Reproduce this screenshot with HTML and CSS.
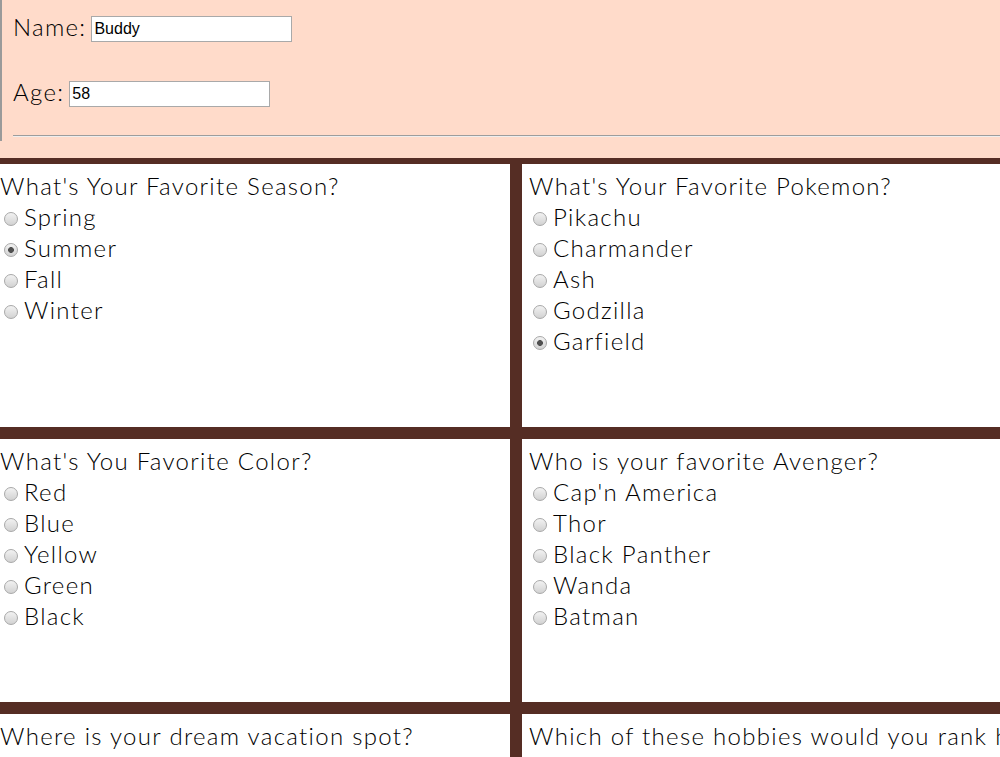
FILE: index.html
```html
<!DOCTYPE html>
<html lang="en">
<head>
<meta charset="utf-8">
<title>Quiz</title>
<link rel="stylesheet" href="styles.css">
</head>
<body>
<header class="profile">
  <div class="profile-inner">
    <div class="field"><label class="field-label" for="name">Name:</label><input class="text-input" id="name" type="text" value="Buddy"></div>
    <div class="field field-age"><label class="field-label" for="age">Age:</label><input class="text-input" id="age" type="text" value="58"></div>
    <hr class="rule">
  </div>
</header>
<main class="quiz">
  <section class="question">
    <h2 class="q-title">What's Your Favorite Season?</h2>
    <label class="option"><input class="radio" type="radio" name="season">Spring</label>
    <label class="option"><input class="radio" type="radio" name="season" checked>Summer</label>
    <label class="option"><input class="radio" type="radio" name="season">Fall</label>
    <label class="option"><input class="radio" type="radio" name="season">Winter</label>
  </section>
  <section class="question">
    <h2 class="q-title">What's Your Favorite Pokemon?</h2>
    <label class="option"><input class="radio" type="radio" name="pokemon">Pikachu</label>
    <label class="option"><input class="radio" type="radio" name="pokemon">Charmander</label>
    <label class="option"><input class="radio" type="radio" name="pokemon">Ash</label>
    <label class="option"><input class="radio" type="radio" name="pokemon">Godzilla</label>
    <label class="option"><input class="radio" type="radio" name="pokemon" checked>Garfield</label>
  </section>
  <section class="question">
    <h2 class="q-title">What's You Favorite Color?</h2>
    <label class="option"><input class="radio" type="radio" name="color">Red</label>
    <label class="option"><input class="radio" type="radio" name="color">Blue</label>
    <label class="option"><input class="radio" type="radio" name="color">Yellow</label>
    <label class="option"><input class="radio" type="radio" name="color">Green</label>
    <label class="option"><input class="radio" type="radio" name="color">Black</label>
  </section>
  <section class="question">
    <h2 class="q-title">Who is your favorite Avenger?</h2>
    <label class="option"><input class="radio" type="radio" name="avenger">Cap'n America</label>
    <label class="option"><input class="radio" type="radio" name="avenger">Thor</label>
    <label class="option"><input class="radio" type="radio" name="avenger">Black Panther</label>
    <label class="option"><input class="radio" type="radio" name="avenger">Wanda</label>
    <label class="option"><input class="radio" type="radio" name="avenger">Batman</label>
  </section>
  <section class="question">
    <h2 class="q-title">Where is your dream vacation spot?</h2>
  </section>
  <section class="question">
    <h2 class="q-title">Which of these hobbies would you rank highest?</h2>
  </section>
</main>
</body>
</html>
```
FILE: styles.css
```css
html, body {
  margin: 0;
  padding: 0;
}
body {
  overflow: hidden;
  background: #ffffff;
  color: #000;
  font-family: "Lato", "Noto Sans", sans-serif;
  font-weight: 300;
  letter-spacing: 1.3px;
  font-size: 24px;
}
.profile {
  background: #ffdbca;
  padding-bottom: 17px;
}
.profile-inner {
  border-left: 2px solid #9a9a9a;
  padding: 16px 0 4px 11px;
}
.field {
  display: flex;
  align-items: center;
  height: 26px;
}
.field-age {
  margin-top: 39px;
}
.field-label {
  margin-right: 5px;
  line-height: 26px;
  position: relative;
  top: -2px;
}
.text-input {
  box-sizing: border-box;
  width: 201px;
  height: 26px;
  margin: 0;
  padding: 1px 2px;
  border: 1px solid #a9a9a9;
  background: #fff;
  font-family: "Liberation Sans", Arial, sans-serif;
  font-weight: 400;
  letter-spacing: 0;
  font-size: 16px;
  color: #000;
}
.rule {
  margin: 28px 0 0 0;
  height: 0;
  border: 0;
  border-top: 1px solid #9d9d9d;
  border-bottom: 1px solid #eeeeee;
}
.quiz {
  display: grid;
  grid-template-columns: 529px 529px;
  width: 1058px;
  margin-left: -13px;
}
.question {
  box-sizing: border-box;
  height: 275px;
  border: 6px solid #552d24;
  padding: 6px 7px 7px;
  display: flex;
  flex-direction: column;
}
.q-title {
  margin: 0;
  font-size: 24px;
  font-weight: 300;
  line-height: 31px;
  white-space: nowrap;
}
.option {
  display: flex;
  align-items: center;
  height: 31px;
  line-height: 31px;
}
.radio {
  appearance: none;
  -webkit-appearance: none;
  box-sizing: border-box;
  width: 14px;
  height: 14px;
  margin: 5px 6px 0 4px;
  border: 1px solid #a8a8a8;
  border-radius: 50%;
  background: linear-gradient(#f2f2f2, #d2d2d2);
  flex: none;
}
.radio:checked {
  background: radial-gradient(circle, #505050 0 2.6px, transparent 3.2px), linear-gradient(#f2f2f2, #d2d2d2);
}
```
